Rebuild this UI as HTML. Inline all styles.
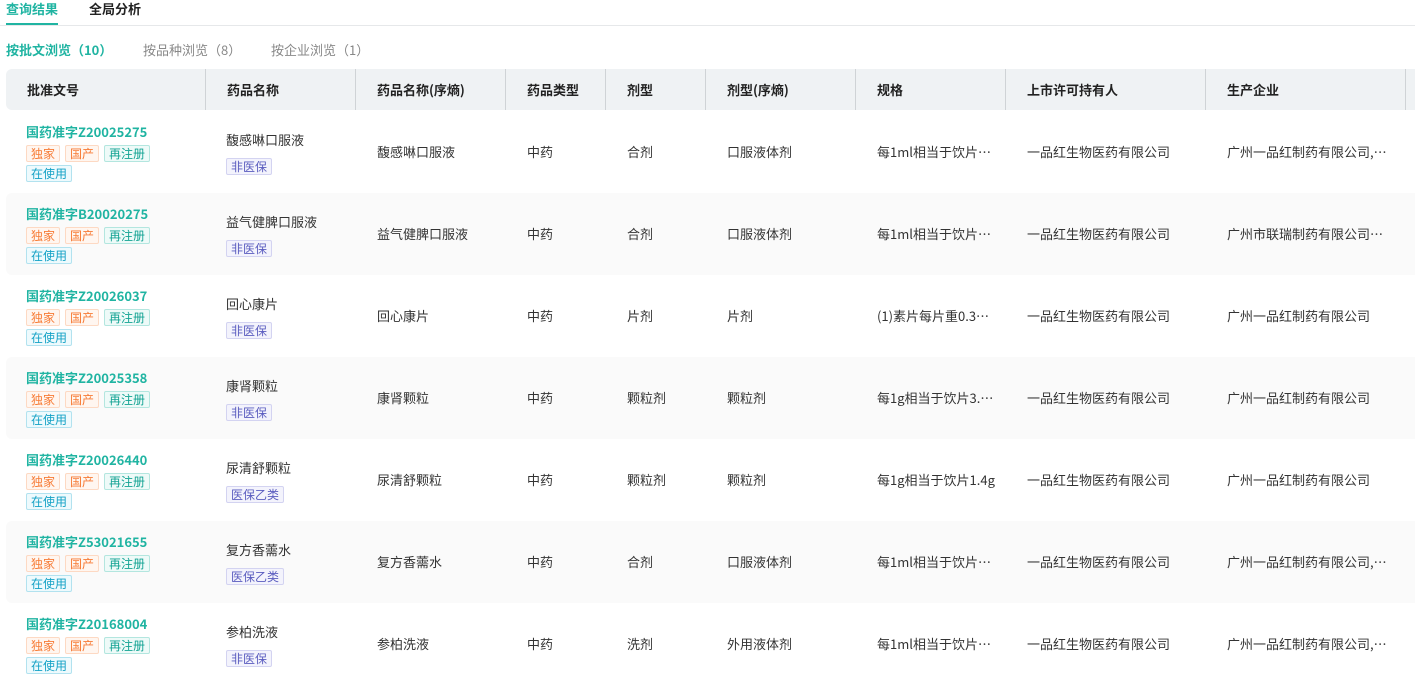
<!DOCTYPE html><html><head><meta charset="utf-8"><style>
*{margin:0;padding:0;box-sizing:border-box}
body{width:1415px;height:657px;overflow:hidden;background:#fff;font-family:"Noto Sans CJK SC","Liberation Sans",sans-serif;color:#333;font-size:13px;position:relative}
.a{position:absolute;white-space:nowrap}
.tabline{position:absolute;left:0;top:25px;width:1415px;height:1px;background:#e6e8ea}
.hdr{position:absolute;left:6px;top:69px;width:1420px;height:41px;background:#eff2f4;border-radius:6px}
.hdr div{position:absolute;top:0;height:41px;line-height:41px;font-weight:bold;font-size:13px;color:#222}
.sep{position:absolute;top:9px;width:1px;height:23px;background:#cfd3d6}
.row{position:absolute;left:6px;width:1420px;height:82px;border-radius:6px}
.row.g{background:#fafafa}
.c{position:absolute;top:0;height:82px;line-height:82px;font-size:13px;color:#333}
.num{position:absolute;left:20px;top:12px;font-weight:bold;color:#20b4a2;font-size:13px;line-height:18px}
.tg{position:absolute;height:17px;line-height:15px;font-size:12px;padding:0 4px;border:1px solid;border-radius:2px}
.o{color:#f77b35;background:#fff6f0;border-color:#fdd9c3}
.t{color:#13a393;background:#eefaf8;border-color:#b3e6df}
.cy{color:#15a2c6;background:#eefafd;border-color:#b2e2ef}
.p{color:#5a5cbf;background:#f3f3fc;border-color:#d3d3f1}
.nm{position:absolute;left:220px;top:20px;line-height:18px;font-size:13px;color:#333}
</style></head><body>
<div class="a" style="left:6px;top:0;font-size:13px;font-weight:bold;color:#20b4a2;line-height:18px">查询结果</div>
<div class="a" style="left:6px;top:23px;width:52px;height:2px;background:#20b4a2;z-index:2"></div>
<div class="a" style="left:89px;top:0;font-size:13px;font-weight:bold;color:#222;line-height:18px">全局分析</div>
<div class="tabline"></div>
<div class="a" style="left:6px;top:41px;line-height:18px;font-weight:bold;color:#20b4a2">按批文浏览（10）</div>
<div class="a" style="left:143px;top:41px;line-height:18px;color:#888">按品种浏览（8）</div>
<div class="a" style="left:271px;top:41px;line-height:18px;color:#888">按企业浏览（1）</div>
<div class="hdr">
<div style="left:21px">批准文号</div><div class="sep" style="left:199px"></div>
<div style="left:221px">药品名称</div><div class="sep" style="left:349px"></div>
<div style="left:371px">药品名称(序熵)</div><div class="sep" style="left:499px"></div>
<div style="left:521px">药品类型</div><div class="sep" style="left:599px"></div>
<div style="left:621px">剂型</div><div class="sep" style="left:699px"></div>
<div style="left:721px">剂型(序熵)</div><div class="sep" style="left:849px"></div>
<div style="left:871px">规格</div><div class="sep" style="left:999px"></div>
<div style="left:1021px">上市许可持有人</div><div class="sep" style="left:1199px"></div>
<div style="left:1221px">生产企业</div><div class="sep" style="left:1399px"></div>
</div>
<div id="rows"></div>
<script>
var d=[["国药准字Z20025275","馥感啉口服液","非医保","合剂","口服液体剂","每1ml相当于饮片⋯","广州一品红制药有限公司,⋯"],
["国药准字B20020275","益气健脾口服液","非医保","合剂","口服液体剂","每1ml相当于饮片⋯","广州市联瑞制药有限公司⋯"],
["国药准字Z20026037","回心康片","非医保","片剂","片剂","(1)素片每片重0.3⋯","广州一品红制药有限公司"],
["国药准字Z20025358","康肾颗粒","非医保","颗粒剂","颗粒剂","每1g相当于饮片3.⋯","广州一品红制药有限公司"],
["国药准字Z20026440","尿清舒颗粒","医保乙类","颗粒剂","颗粒剂","每1g相当于饮片1.4g","广州一品红制药有限公司"],
["国药准字Z53021655","复方香薷水","医保乙类","合剂","口服液体剂","每1ml相当于饮片⋯","广州一品红制药有限公司,⋯"],
["国药准字Z20168004","参柏洗液","非医保","洗剂","外用液体剂","每1ml相当于饮片⋯","广州一品红制药有限公司,⋯"]];
var h="";
d.forEach(function(r,i){
h+='<div class="row'+(i%2?' g':'')+'" style="top:'+(111+82*i)+'px">'+
'<div class="num">'+r[0]+'</div>'+
'<div class="tg o" style="left:20px;top:34px">独家</div><div class="tg o" style="left:59px;top:34px">国产</div><div class="tg t" style="left:98px;top:34px">再注册</div>'+
'<div class="tg cy" style="left:20px;top:54px">在使用</div>'+
'<div class="nm">'+r[1]+'</div>'+
'<div class="tg p" style="left:220px;top:47px">'+r[2]+'</div>'+
'<div class="c" style="left:371px">'+r[1]+'</div>'+
'<div class="c" style="left:521px">中药</div>'+
'<div class="c" style="left:621px">'+r[3]+'</div>'+
'<div class="c" style="left:721px">'+r[4]+'</div>'+
'<div class="c" style="left:871px">'+r[5]+'</div>'+
'<div class="c" style="left:1021px">一品红生物医药有限公司</div>'+
'<div class="c" style="left:1221px">'+r[6]+'</div></div>';});
document.getElementById("rows").innerHTML=h;
</script>
</body></html>
